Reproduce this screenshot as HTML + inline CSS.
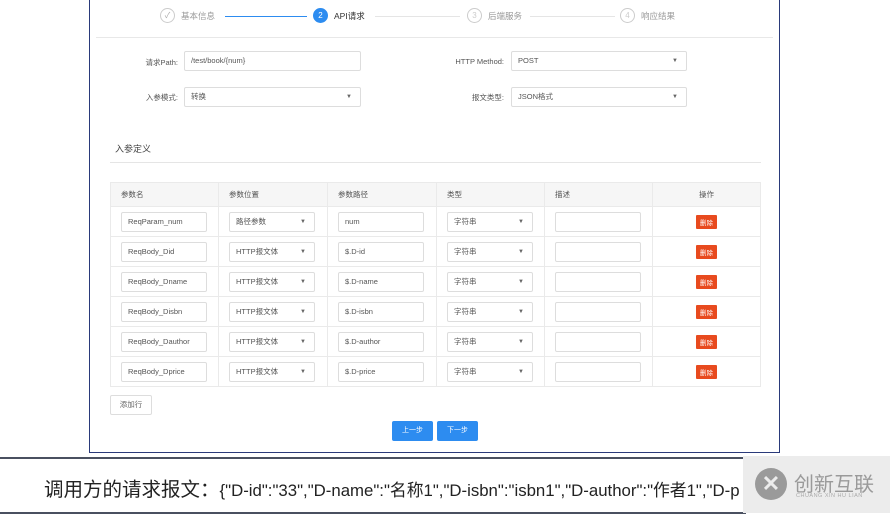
<!DOCTYPE html>
<html><head><meta charset="utf-8"><style>
*{box-sizing:border-box;margin:0;padding:0}
body{width:890px;height:513px;background:#fff;font-family:"Liberation Sans","Noto Sans CJK SC",sans-serif;position:relative;overflow:hidden;font-size:8px;color:#555}
.frame{position:absolute;left:89px;top:-2px;width:691px;height:455px;border:1.5px solid #2a3a7a;background:#fff}
.abs{position:absolute}
.circ{position:absolute;width:15px;height:15px;border-radius:50%;border:1px solid #ccc;text-align:center;line-height:13px;font-size:8px;color:#ccc}
.inp{position:absolute;border:1px solid #ddd;border-radius:2px;height:20px;line-height:18px;padding-left:6px;font-size:7.5px;color:#555;background:#fff}
.arr::after{content:"▼";position:absolute;right:8px;top:0;font-size:6px;color:#666}
.lbl{position:absolute;font-size:7.5px;color:#555;text-align:right}
table{position:absolute;left:110px;top:182px;width:651px;border-collapse:collapse;border:1px solid #e5e5e5}
td,th{border:1px solid #eaeaea;height:30px;position:relative;font-size:7.5px;font-weight:normal;text-align:left;padding-left:10px}
th{height:24px;background:#f6f6f6;color:#555}
td .inp{left:10px;top:5px;width:86px}
.del{display:inline-block;background:#e84a1e;color:#fff;font-size:6.5px;padding:2px 4px;border-radius:1px}
.btn{position:absolute;top:421px;height:20px;width:41px;background:#2d8cf0;color:#fff;font-size:7px;text-align:center;line-height:20px;border-radius:2px}
</style></head><body>
<div class="frame"></div>
<div class="circ" style="left:160px;top:8px;color:#aaa">✓</div>
<div class="abs" style="left:181px;top:10px;font-size:8.5px;color:#999">基本信息</div>
<div class="abs" style="left:225px;top:16px;width:82px;border-top:1px solid #2d8cf0"></div>
<div class="circ" style="left:313px;top:8px;background:#2d8cf0;border-color:#2d8cf0;color:#fff">2</div>
<div class="abs" style="left:334px;top:10px;font-size:8.5px;color:#333">API请求</div>
<div class="abs" style="left:375px;top:16px;width:85px;border-top:1px solid #e5e5e5"></div>
<div class="circ" style="left:467px;top:8px">3</div>
<div class="abs" style="left:488px;top:10px;font-size:8.5px;color:#999">后端服务</div>
<div class="abs" style="left:530px;top:16px;width:85px;border-top:1px solid #e5e5e5"></div>
<div class="circ" style="left:620px;top:8px">4</div>
<div class="abs" style="left:641px;top:10px;font-size:8.5px;color:#999">响应结果</div>
<div class="abs" style="left:96px;top:37px;width:677px;border-top:1px solid #e8e8e8"></div>
<div class="lbl" style="left:120px;top:57px;width:58px">请求Path:</div>
<div class="inp" style="left:184px;top:51px;width:177px">/test/book/{num}</div>
<div class="lbl" style="left:430px;top:57px;width:74px">HTTP Method:</div>
<div class="inp arr" style="left:511px;top:51px;width:176px">POST</div>
<div class="lbl" style="left:120px;top:92px;width:58px">入参模式:</div>
<div class="inp arr" style="left:184px;top:87px;width:177px">转换</div>
<div class="lbl" style="left:430px;top:92px;width:74px">报文类型:</div>
<div class="inp arr" style="left:511px;top:87px;width:176px">JSON格式</div>
<div class="abs" style="left:115px;top:142px;font-size:9px;color:#444">入参定义</div>
<div class="abs" style="left:110px;top:162px;width:651px;border-top:1px solid #e5e5e5"></div>
<table>
<tr><th style="width:108px">参数名</th><th style="width:109px">参数位置</th><th style="width:109px">参数路径</th><th style="width:108px">类型</th><th style="width:108px">描述</th><th style="text-align:center;padding:0">操作</th></tr>
<tr><td><div class="inp">ReqParam_num</div></td><td><div class="inp arr">路径参数</div></td><td><div class="inp">num</div></td><td><div class="inp arr">字符串</div></td><td><div class="inp"></div></td><td style="text-align:center;padding:0"><span class="del">删除</span></td></tr>
<tr><td><div class="inp">ReqBody_Did</div></td><td><div class="inp arr">HTTP报文体</div></td><td><div class="inp">$.D-id</div></td><td><div class="inp arr">字符串</div></td><td><div class="inp"></div></td><td style="text-align:center;padding:0"><span class="del">删除</span></td></tr>
<tr><td><div class="inp">ReqBody_Dname</div></td><td><div class="inp arr">HTTP报文体</div></td><td><div class="inp">$.D-name</div></td><td><div class="inp arr">字符串</div></td><td><div class="inp"></div></td><td style="text-align:center;padding:0"><span class="del">删除</span></td></tr>
<tr><td><div class="inp">ReqBody_Disbn</div></td><td><div class="inp arr">HTTP报文体</div></td><td><div class="inp">$.D-isbn</div></td><td><div class="inp arr">字符串</div></td><td><div class="inp"></div></td><td style="text-align:center;padding:0"><span class="del">删除</span></td></tr>
<tr><td><div class="inp">ReqBody_Dauthor</div></td><td><div class="inp arr">HTTP报文体</div></td><td><div class="inp">$.D-author</div></td><td><div class="inp arr">字符串</div></td><td><div class="inp"></div></td><td style="text-align:center;padding:0"><span class="del">删除</span></td></tr>
<tr><td><div class="inp">ReqBody_Dprice</div></td><td><div class="inp arr">HTTP报文体</div></td><td><div class="inp">$.D-price</div></td><td><div class="inp arr">字符串</div></td><td><div class="inp"></div></td><td style="text-align:center;padding:0"><span class="del">删除</span></td></tr>
</table>
<div class="inp" style="left:110px;top:395px;width:42px;text-align:center;padding:0;line-height:18px;color:#666">添加行</div>
<div class="btn" style="left:392px">上一步</div>
<div class="btn" style="left:437px">下一步</div>
<div class="abs" style="left:-2px;top:457px;width:748px;height:57px;border:2px solid #4a5060;border-right:none"></div>
<div class="abs" style="left:44px;top:473px;font-size:19.5px;color:#222;white-space:nowrap;width:700px;overflow:hidden">调用方的请求报文：<span style="font-size:16.8px">{"D-id":"33","D-name":"名称1","D-isbn":"isbn1","D-author":"作者1","D-p</span></div>
<div class="abs" style="left:743px;top:456px;width:147px;height:57px;background:#ececec"></div>
<div class="abs" style="left:755px;top:468px;width:32px;height:32px;border-radius:50%;background:#9a9a9a;color:#ececec;font-size:22px;text-align:center;line-height:32px;font-weight:bold">✕</div>
<div class="abs" style="left:794px;top:468px;font-size:20px;color:#9a9a9a">创新互联</div>
<div class="abs" style="left:796px;top:493px;font-size:5.5px;color:#aaa;letter-spacing:.5px">CHUANG XIN HU LIAN</div>
</body></html>
